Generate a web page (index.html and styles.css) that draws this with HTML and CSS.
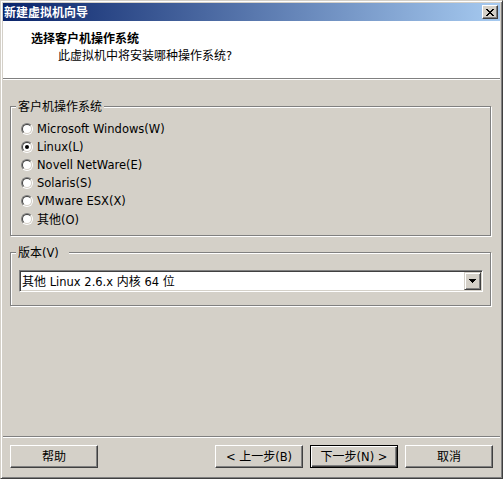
FILE: index.html
```html
<!DOCTYPE html>
<html lang="zh">
<head>
<meta charset="utf-8">
<title>新建虚拟机向导</title>
<link rel="stylesheet" href="styles.css">
</head>
<body>
<div class="window">
  <div class="titlebar">
    <span class="title">新建虚拟机向导</span>
    <span class="close">
      <svg width="8" height="7" viewBox="0 0 8 7" shape-rendering="crispEdges">
        <rect x="0" y="0" width="2" height="1"/><rect x="6" y="0" width="2" height="1"/>
        <rect x="1" y="1" width="2" height="1"/><rect x="5" y="1" width="2" height="1"/>
        <rect x="2" y="2" width="4" height="1"/>
        <rect x="3" y="3" width="2" height="1"/>
        <rect x="2" y="4" width="4" height="1"/>
        <rect x="1" y="5" width="2" height="1"/><rect x="5" y="5" width="2" height="1"/>
        <rect x="0" y="6" width="2" height="1"/><rect x="6" y="6" width="2" height="1"/>
      </svg>
    </span>
  </div>
  <div class="header">
    <div class="h-title">选择客户机操作系统</div>
    <div class="h-sub"><span class="zh">此虚拟机中将安装哪种操作系统</span>?</div>
  </div>
  <div class="sep"></div>
  <div class="main">
    <div class="group group-os">
      <div class="group-label">客户机操作系统</div>
      <ul class="radios">
        <li class="radio-row"><span class="radio"></span><span>Microsoft Windows(W)</span></li>
        <li class="radio-row"><span class="radio checked"></span><span>Linux(L)</span></li>
        <li class="radio-row"><span class="radio"></span><span>Novell NetWare(E)</span></li>
        <li class="radio-row"><span class="radio"></span><span>Solaris(S)</span></li>
        <li class="radio-row"><span class="radio"></span><span>VMware ESX(X)</span></li>
        <li class="radio-row"><span class="radio"></span><span><span class="zh">其他</span>(O)</span></li>
      </ul>
    </div>
    <div class="group group-ver">
      <div class="group-label group-label-wide"><span class="zh">版本</span>(V)</div>
      <div class="combo">
        <span class="combo-text"><span class="zh">其他</span> Linux 2.6.x <span class="zh">内核</span> 64 <span class="zh">位</span></span>
        <span class="combo-btn">
          <svg width="7" height="4" viewBox="0 0 7 4" shape-rendering="crispEdges">
            <rect x="0" y="0" width="7" height="1"/><rect x="1" y="1" width="5" height="1"/>
            <rect x="2" y="2" width="3" height="1"/><rect x="3" y="3" width="1" height="1"/>
          </svg>
        </span>
      </div>
    </div>
  </div>
  <div class="footer">
    <button class="btn"><span class="zh">帮助</span></button>
    <div class="spacer"></div>
    <button class="btn">&lt; <span class="zh">上一步</span>(B)</button>
    <button class="btn btn-default"><span class="zh">下一步</span>(N) &gt;</button>
    <button class="btn"><span class="zh">取消</span></button>
  </div>
</div>
</body>
</html>
```
FILE: styles.css
```css
html, body {
  margin: 0;
  padding: 0;
}
body {
  background: #d4d0c8;
  color: #000;
  font-family: "DejaVu Sans", "Noto Sans CJK SC", sans-serif;
  font-size: 11.5px;
  line-height: 14px;
}
.zh {
  font-family: "Noto Sans CJK SC", sans-serif;
  font-size: 12px;
}
.window {
  box-sizing: border-box;
  width: 503px;
  height: 479px;
  border: 1px solid;
  border-color: #d4d0c8 #404040 #404040 #d4d0c8;
  box-shadow: inset 1px 1px 0 #fff, inset -1px -1px 0 #808080;
  padding: 2px;
  background: #d4d0c8;
  display: flex;
  flex-direction: column;
}
.titlebar {
  flex: none;
  height: 18px;
  display: flex;
  align-items: center;
  background: linear-gradient(to right, #0a246a, #a6caf0);
}
.title {
  flex: 1;
  padding-left: 1px;
  color: #fff;
  font-weight: bold;
  font-family: "Noto Sans CJK SC", sans-serif;
  font-size: 12px;
  line-height: 14px;
}
.close {
  box-sizing: border-box;
  width: 16px;
  height: 14px;
  margin-right: 2px;
  background: #d4d0c8;
  border: 1px solid;
  border-color: #fff #404040 #404040 #fff;
  box-shadow: inset -1px -1px 0 #808080;
  display: flex;
  align-items: center;
  justify-content: center;
}
.close svg {
  display: block;
  margin-left: -1px;
}
.header {
  flex: none;
  box-sizing: border-box;
  height: 57px;
  background: #fff;
  padding-top: 10px;
}
.h-title {
  margin-left: 28px;
  font-family: "Noto Sans CJK SC", sans-serif;
  font-size: 12px;
  font-weight: bold;
}
.h-sub {
  margin-left: 55px;
  margin-top: 3px;
}
.sep {
  flex: none;
  height: 0;
  border-top: 1px solid #808080;
  border-bottom: 1px solid #fff;
}
.main {
  flex: 1;
  padding: 26px 0 0 7px;
}
.group {
  box-sizing: border-box;
  width: 481px;
  border: 1px solid #808080;
  box-shadow: inset 1px 1px 0 #fff, 1px 1px 0 #fff;
}
.group-os {
  padding-bottom: 7px;
}
.group-ver {
  margin-top: 16px;
  padding: 0 0 13px 8px;
}
.group-label {
  width: max-content;
  margin: -8px 0 0 5px;
  padding: 0 2px;
  background: #d4d0c8;
  font-family: "Noto Sans CJK SC", sans-serif;
  font-size: 12px;
  line-height: 14px;
}
.group-ver .group-label {
  margin-left: -3px;
}
.group-label-wide {
  font-family: "DejaVu Sans", "Noto Sans CJK SC", sans-serif;
  font-size: 11.5px;
  padding-right: 10px;
}
.radios {
  list-style: none;
  margin: 7px 0 0;
  padding: 0 0 0 10px;
}
.radio-row {
  display: flex;
  align-items: center;
  gap: 4px;
  height: 18px;
}
.radio {
  flex: none;
  position: relative;
  box-sizing: border-box;
  width: 12px;
  height: 12px;
  border-radius: 50%;
  border: 1px solid;
  border-color: #808080 #fff #fff #808080;
}
.radio::before {
  content: "";
  position: absolute;
  inset: 0;
  box-sizing: border-box;
  border-radius: 50%;
  border: 1px solid;
  border-color: #404040 #d4d0c8 #d4d0c8 #404040;
  background: #fff;
}
.radio.checked::after {
  content: "";
  position: absolute;
  left: 3px;
  top: 3px;
  width: 4px;
  height: 4px;
  border-radius: 50%;
  background: #000;
}
.combo {
  box-sizing: border-box;
  width: 464px;
  height: 22px;
  margin-top: 10px;
  padding: 1px;
  border: 1px solid;
  border-color: #808080 #fff #fff #808080;
  box-shadow: inset 1px 1px 0 #404040, inset -1px -1px 0 #d4d0c8;
  background: #fff;
  display: flex;
  align-items: center;
}
.combo-text {
  flex: 1;
  padding-left: 1px;
  line-height: 14px;
  white-space: nowrap;
}
.combo-btn {
  flex: none;
  box-sizing: border-box;
  width: 17px;
  height: 18px;
  border: 1px solid;
  border-color: #d4d0c8 #404040 #404040 #d4d0c8;
  box-shadow: inset 1px 1px 0 #fff, inset -1px -1px 0 #808080;
  background: #d4d0c8;
  display: flex;
  align-items: center;
  justify-content: center;
}
.combo-btn svg {
  display: block;
}
.footer {
  flex: none;
  display: flex;
  gap: 7px;
  padding: 8px 7px;
  border-top: 1px solid #808080;
  box-shadow: inset 0 1px 0 #fff;
}
.spacer {
  flex: 1;
}
.btn {
  box-sizing: border-box;
  width: 88px;
  height: 23px;
  margin: 0;
  padding: 0;
  background: #d4d0c8;
  color: #000;
  font: inherit;
  line-height: 14px;
  border: 1px solid;
  border-color: #fff #404040 #404040 #fff;
  box-shadow: inset -1px -1px 0 #808080;
  white-space: nowrap;
}
.btn-default {
  border-color: #000;
  box-shadow: inset 1px 1px 0 #fff, inset -1px -1px 0 #404040, inset -2px -2px 0 #808080;
}
```
